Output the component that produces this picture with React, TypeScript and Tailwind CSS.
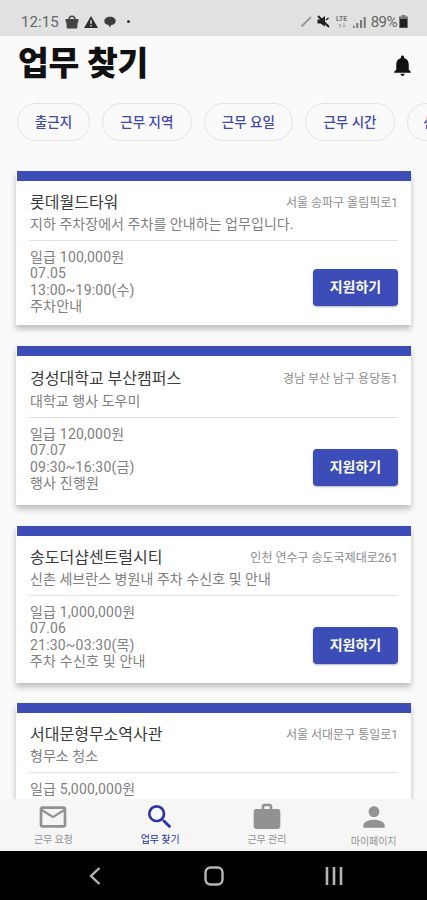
import { MdMailOutline, MdNotifications, MdPerson, MdSearch, MdWork } from "react-icons/md";

type Job = {
  title: string;
  address: string;
  summary: string;
  details: string[];
  card: string;
  head: string;
  sub: string;
  button: string;
};

const FILTERS: { label: string; width: string }[] = [
  { label: "출근지", width: "w-[73px]" },
  { label: "근무 지역", width: "w-[89.6px]" },
  { label: "근무 요일", width: "w-[89.6px]" },
  { label: "근무 시간", width: "w-[89.6px]" },
  { label: "신청 상태", width: "w-[86px]" },
];

const JOBS: Job[] = [
  {
    title: "롯데월드타워",
    address: "서울 송파구 올림픽로1",
    summary: "지하 주차장에서 주차를 안내하는 업무입니다.",
    details: ["일급 100,000원", "07.05", "13:00~19:00(수)", "주차안내"],
    card: "h-[154px] mb-[21px]",
    head: "pt-[11px]",
    sub: "h-[27px]",
    button: "mt-[28px]",
  },
  {
    title: "경성대학교 부산캠퍼스",
    address: "경남 부산 남구 용당동1",
    summary: "대학교 행사 도우미",
    details: ["일급 120,000원", "07.07", "09:30~16:30(금)", "행사 진행원"],
    card: "h-[159px] mb-[21px]",
    head: "pt-[12px]",
    sub: "h-[28px] pt-px",
    button: "mt-[31px]",
  },
  {
    title: "송도더샵센트럴시티",
    address: "인천 연수구 송도국제대로261",
    summary: "신촌 세브란스 병원내 주차 수신호 및 안내",
    details: ["일급 1,000,000원", "07.06", "21:30~03:30(목)", "주차 수신호 및 안내"],
    card: "h-[157px] mb-[20px]",
    head: "pt-[11px]",
    sub: "h-[27px]",
    button: "mt-[31px]",
  },
  {
    title: "서대문형무소역사관",
    address: "서울 서대문구 통일로1",
    summary: "형무소 청소",
    details: ["일급 5,000,000원"],
    card: "h-[157px]",
    head: "pt-[11px]",
    sub: "h-[27px]",
    button: "mt-[31px]",
  },
];

const TABS = [
  { label: "근무 요청", icon: MdMailOutline, active: false, text: "" },
  { label: "업무 찾기", icon: MdSearch, active: true, text: "" },
  { label: "근무 관리", icon: MdWork, active: false, text: "" },
  { label: "마이페이지", icon: MdPerson, active: false, text: "pt-[2px]" },
];

export default function App() {
  return (
    <div className="flex h-[900px] w-[427px] flex-col overflow-hidden bg-[#fafafa] font-['Roboto','Noto_Sans_CJK_KR',sans-serif]">
      <StatusBar />
      <header className="flex h-[54px] shrink-0 items-center justify-between pl-[18px] pr-[12px]">
        <h1 className="pt-px text-[33.5px] leading-[53px] font-black tracking-[-0.3px] whitespace-nowrap text-[#111]">업무 찾기</h1>
        <MdNotifications size={25} className="mt-1 text-[#111]" />
      </header>
      <div className="mt-[13px] flex h-[38px] shrink-0 gap-3 overflow-hidden pl-[17px]">
        {FILTERS.map((f) => (
          <button
            key={f.label}
            className={`h-[38px] shrink-0 rounded-full border border-[#e3e3e3] text-[13.5px] font-medium whitespace-nowrap text-[#3f48ac] ${f.width}`}
          >
            {f.label}
          </button>
        ))}
      </div>
      <main className="min-h-0 flex-1 overflow-hidden px-4 pt-[30px]">
        {JOBS.map((job) => (
          <JobCard key={job.title} job={job} />
        ))}
      </main>
      <TabBar />
      <SystemNav />
    </div>
  );
}

function StatusBar() {
  return (
    <div className="flex h-9 shrink-0 items-center justify-between bg-[#e1e1e1] pt-[7px] pr-[19px] pl-[21px] text-[#666]">
      <div className="flex items-center">
        <span className="w-[39px] text-[15px] leading-4 tracking-[0.1px]">12:15</span>
        {/* shopping bag */}
        <svg width="14" height="14" viewBox="0 0 14 14" className="ml-[5px]" fill="none">
          <path d="M4 5c0-5 6-5 6 0" stroke="#444" strokeWidth="1.6" />
          <path d="M.5 4h13v2.600h-.6L12 13.500H2L1.100 6.600H.5z" fill="#444" />
        </svg>
        <svg width="14" height="12" viewBox="0 0 14 12" className="ml-[5px]">
          <path d="M7 0l7 12H0z" fill="#2c2c2c" />
          <path d="M7 4v4M7 9v1.4" stroke="#ddd" strokeWidth="1.4" />
        </svg>
        <svg width="12" height="12" viewBox="0 0 12 12" className="ml-[6px]">
          <path d="M6 .8c3.3 0 5.7 1.7 5.7 4.2S9.6 8.8 7.2 9.1L5.8 11.6 4.6 9C2 8.600.3 7.200.3 5S2.700.8 6 .8z" fill="#3c3c3c" />
        </svg>
        <span className="ml-[11px] size-[3px] rounded-full bg-[#333]" />
      </div>
      <div className="flex items-center">
        <svg width="12" height="12" viewBox="0 0 12 12">
          <path d="M1.5 10.5L11 1" stroke="#999" strokeWidth="2" />
        </svg>
        {/* muted speaker */}
        <svg width="13" height="13" viewBox="0 0 13 13" className="ml-[5px]" fill="none">
          <path d="M.5 4.5h3L8 1v10.5l-4.5-3h-3z" fill="#222" />
          <path d="M1 1l11 11" stroke="#222" strokeWidth="2" />
          <path d="M9 5l2.5-2" stroke="#222" strokeWidth="1.5" />
        </svg>
        <span className="ml-[5px] flex w-[14px] flex-col items-center text-[7px] leading-[7px] font-bold text-[#777]">
          LTE
          <svg width="8" height="5" viewBox="0 0 8 5" fill="none" stroke="#999">
            <path d="M2 5V1M.5 2.5L2 1l1.5 1.5M6 0v4M4.5 2.5L6 4l1.5-1.5" strokeWidth=".8" />
          </svg>
        </span>
        <svg width="13" height="12" viewBox="0 0 13 12" className="ml-[4px]" fill="#777">
          <path d="M0 9.5h1.5V12H0zM3.3 7h2v5h-2zM7 4h2v8H7zM10.7 1h2v11h-2z" />
        </svg>
        <span className="ml-[5px] text-[15px] leading-4 tracking-[-0.5px]">89%</span>
        <svg width="9" height="13" viewBox="0 0 9 13" className="ml-[2px]">
          <path d="M2.5 0h4v1.5H9V13H0V1.5h2.5z" fill="#777" />
          <path d="M1 4h7v8.5H1z" fill="#222" />
        </svg>
      </div>
    </div>
  );
}

function JobCard({ job }: { job: Job }) {
  return (
    <article className={`flex flex-col bg-white shadow-[0_4px_6px_rgba(0,0,0,0.25)] ${job.card}`}>
      <div className="ml-px h-[10px] w-[394px] shrink-0 bg-[#3d4db7]" />
      <div className={`flex shrink-0 items-center justify-between pr-[13px] pl-[14px] ${job.head}`}>
        <h2 className="text-[16px] leading-[22px] whitespace-nowrap text-[#3a3a3a]">{job.title}</h2>
        <span className="text-[12px] leading-[22px] whitespace-nowrap text-[#8c8c8c]">{job.address}</span>
      </div>
      <p className={`mx-[13px] shrink-0 border-b border-[#e0e0e0] pl-px text-[14px] leading-[21px] tracking-[0.05px] whitespace-nowrap text-[#808080] ${job.sub}`}>
        {job.summary}
      </p>
      <div className="flex items-start justify-between pr-[13px] pl-[14px]">
        <ul className="pt-[8px] text-[14px] tracking-[0.2px] text-[#808080]">
          {job.details.map((line) => (
            <li key={line} className="h-[16.3px] leading-[16.3px] whitespace-nowrap">
              {line}
            </li>
          ))}
        </ul>
        <button className={`h-[37px] w-[85px] rounded-[4px] bg-[#3d4db7] text-[14px] font-bold text-white shadow-[0_1px_2px_rgba(0,0,0,0.3)] ${job.button}`}>
          지원하기
        </button>
      </div>
    </article>
  );
}

function TabBar() {
  return (
    <nav className="z-10 grid h-[52px] shrink-0 grid-cols-4 bg-[#f6f6f6]">
      {TABS.map(({ label, icon: Icon, active, text }) => (
        <button key={label} className={`flex flex-col items-center pt-[2px] ${active ? "text-[#2533a8]" : "text-[#929292]"}`}>
          <Icon size={32} />
          <span className={`text-[10px] leading-[14px] tracking-[-0.1px] whitespace-nowrap ${text}`}>{label}</span>
        </button>
      ))}
    </nav>
  );
}

function SystemNav() {
  return (
    <div className="flex h-[49px] shrink-0 items-center justify-between bg-black pr-[84px] pl-[88px]">
      <svg width="14" height="18" viewBox="0 0 14 18" fill="none" stroke="#b5b5b5" strokeWidth="2.4">
        <path d="M11.500 1L3 9l8.500 8" />
      </svg>
      <svg width="20" height="20" viewBox="0 0 20 20" fill="none" stroke="#b5b5b5" strokeWidth="2.4">
        <rect x="1.5" y="1.5" width="17" height="17" rx="5" />
      </svg>
      <svg width="18" height="18" viewBox="0 0 18 18" stroke="#b5b5b5" strokeWidth="2.6">
        <path d="M2 0v18M9 0v18M16 0v18" />
      </svg>
    </div>
  );
}
